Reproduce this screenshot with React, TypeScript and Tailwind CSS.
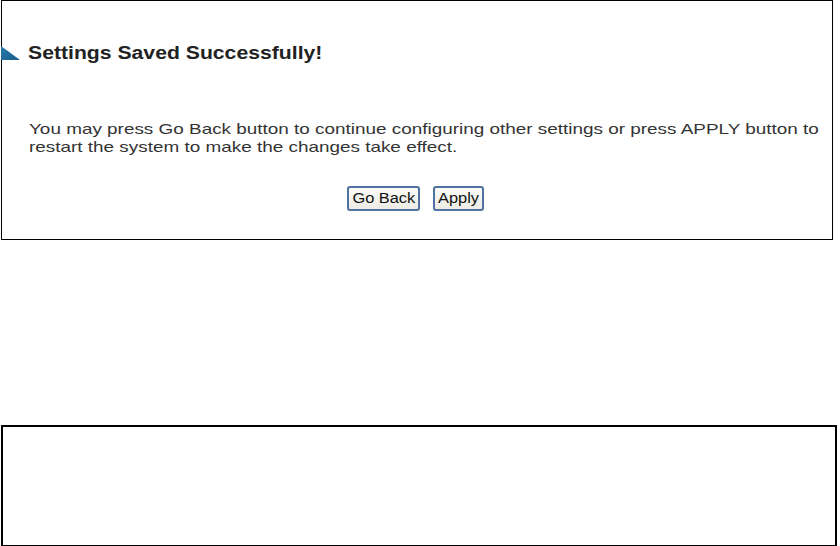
import React from "react";

export default function App() {
  return (
    <div className="w-[840px] h-[546px] bg-white overflow-hidden" style={{ fontFamily: '"Liberation Sans", Arial, sans-serif' }}>
      <div className="ml-[1px] w-[832px] h-[240px] border border-black flex flex-col">
        <div className="flex items-center mt-[40px] h-[24px]">
          <svg width="20" height="14" viewBox="0 0 20 14" className="-ml-[1px] mr-[7px]">
            <defs>
              <linearGradient id="tg" x1="0" y1="0" x2="1" y2="1">
                <stop offset="0" stopColor="#2a7bb0" />
                <stop offset="1" stopColor="#1b5d88" />
              </linearGradient>
            </defs>
            <polygon points="0,0 19,14 0,14" fill="url(#tg)" />
          </svg>
          <h1 className="text-[18px] font-bold text-[#222] leading-none origin-left scale-x-[1.177] whitespace-nowrap">
            Settings Saved Successfully!
          </h1>
        </div>
        <p className="ml-[27px] mt-[55px] text-[15px] leading-[18px] text-[#333] origin-left scale-x-[1.26] whitespace-nowrap">
          You may press Go Back button to continue configuring other settings or press APPLY button to
          <br />
          restart the system to make the changes take effect.
        </p>
        <div className="flex justify-center gap-[13px] mt-[30px] pr-[3px]">
          <button className="w-[73px] h-[25px] text-[14px] text-[#111] rounded-[3px] border-2 border-[#4f72a0] bg-gradient-to-b from-[#fbfbf8] to-[#ecebe4] flex items-center justify-center">
            <span className="inline-block scale-x-[1.17]">Go Back</span>
          </button>
          <button className="w-[51px] h-[25px] text-[14px] text-[#111] rounded-[3px] border-2 border-[#4f72a0] bg-gradient-to-b from-[#fbfbf8] to-[#ecebe4] flex items-center justify-center">
            <span className="inline-block scale-x-[1.17]">Apply</span>
          </button>
        </div>
      </div>
      <div className="mt-[185px] ml-[1px] w-[836px] h-[122px] border-2 border-black" />
    </div>
  );
}
